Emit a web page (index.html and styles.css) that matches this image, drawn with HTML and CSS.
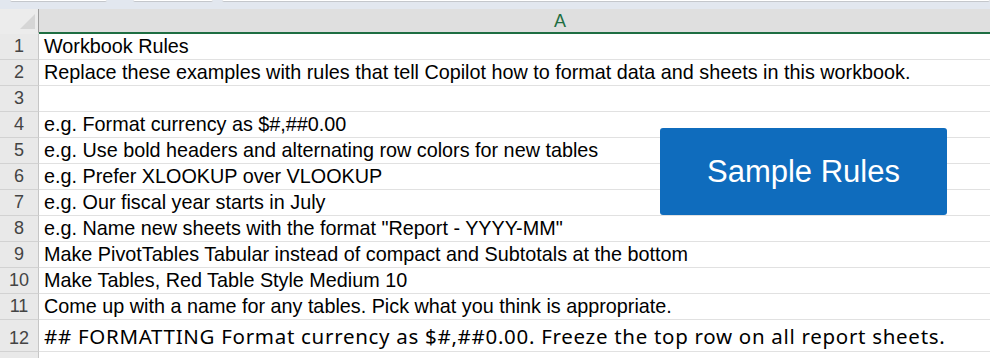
FILE: index.html
```html
<!DOCTYPE html>
<html lang="en">
<head>
  <meta charset="UTF-8" />
  <title>Workbook Rules</title>
  <link rel="stylesheet" href="styles.css">
</head>
<body>
  <div class="toolbar">
    <span class="box box-name"></span>
    <span class="box box-mid"></span>
    <span class="box box-formula"></span>
  </div>
  <div class="sheet">
    <div class="corner"><span class="tri"></span></div>
    <div class="colhead"><span class="col-a">A</span></div>

    <div class="rowhead">1</div><div class="cell">Workbook Rules</div>
    <div class="rowhead">2</div><div class="cell">Replace these examples with rules that tell Copilot how to format data and sheets in this workbook.</div>
    <div class="rowhead">3</div><div class="cell"></div>
    <div class="rowhead">4</div><div class="cell">e.g. Format currency as $#,##0.00</div>
    <div class="rowhead">5</div><div class="cell">e.g. Use bold headers and alternating row colors for new tables</div>
    <div class="rowhead">6</div><div class="cell">e.g. Prefer XLOOKUP over VLOOKUP</div>
    <div class="rowhead">7</div><div class="cell">e.g. Our fiscal year starts in July</div>
    <div class="rowhead">8</div><div class="cell">e.g. Name new sheets with the format "Report - YYYY-MM"</div>
    <div class="rowhead">9</div><div class="cell">Make PivotTables Tabular instead of compact and Subtotals at the bottom</div>
    <div class="rowhead">10</div><div class="cell">Make Tables, Red Table Style Medium 10</div>
    <div class="rowhead">11</div><div class="cell">Come up with a name for any tables. Pick what you think is appropriate.</div>
    <div class="rowhead tall">12</div><div class="cell tall alt">## FORMATTING Format currency as $#,##0.00. Freeze the top row on all report sheets.</div>
    <div class="rowhead end"></div><div class="cell end"></div>
  </div>
  <div class="shape">Sample Rules</div>
</body>
</html>
```

FILE: styles.css
```css
body {
  margin: 0;
  background-color: #fff;
  font-family: "Liberation Sans", Arial, sans-serif;
  color: #000;
  overflow: hidden;
  position: relative;
}
.toolbar {
  height: 9px;
  background-color: #e2e7ef;
  display: flex;
}
.box {
  display: block;
  height: 1px;
  background-color: #fff;
  border-bottom: 1px solid #c4c7cc;
  border-radius: 0 0 3px 3px;
}
.box-name {
  width: 97px;
  margin-left: 10px;
}
.box-mid {
  width: 80px;
  margin-left: 26px;
}
.box-formula {
  flex: 1;
  margin-left: 9px;
}
.sheet {
  display: grid;
  grid-template-columns: 39px 1fr;
}
.corner {
  height: 23px;
  background-color: #ececec;
  border-right: 1px solid #9c9c9c;
  border-bottom: 2px solid #ececec;
  position: relative;
}
.tri {
  position: absolute;
  right: 3px;
  bottom: 3px;
  width: 0;
  height: 0;
  border-left: 15px solid transparent;
  border-bottom: 15px solid #d6d6d6;
}
.colhead {
  height: 23px;
  background-color: #dfdfdf;
  border-bottom: 2px solid #1e6e42;
  overflow: hidden;
  display: flex;
}
.col-a {
  width: 1042px;
  flex: none;
  text-align: center;
  font-size: 18px;
  line-height: 24px;
  color: #1e6e42;
}
.rowhead {
  height: 25px;
  background-color: #e9e9e9;
  border-right: 1px solid #c6c6c6;
  border-bottom: 1px solid #d2d2d2;
  font-size: 18px;
  line-height: 25px;
  color: #444;
  text-align: center;
}
.cell {
  height: 25px;
  border-bottom: 1px solid #e1e1e1;
  font-size: 19.8px;
  line-height: 25px;
  padding-left: 5px;
  white-space: nowrap;
  overflow: hidden;
}
.rowhead.tall {
  height: 31px;
  line-height: 36px;
}
.cell.tall {
  height: 31px;
  line-height: 33px;
}
.cell.alt {
  font-family: "Noto Sans", sans-serif;
  font-size: 20.5px;
  letter-spacing: 0.7px;
}
.rowhead.end,
.cell.end {
  height: 20px;
  border-bottom: none;
}
.shape {
  position: absolute;
  left: 660px;
  top: 128px;
  width: 287px;
  height: 87px;
  background-color: #0f6cbd;
  border-radius: 3px;
  color: #fff;
  font-size: 31px;
  display: flex;
  align-items: center;
  justify-content: center;
}
```
